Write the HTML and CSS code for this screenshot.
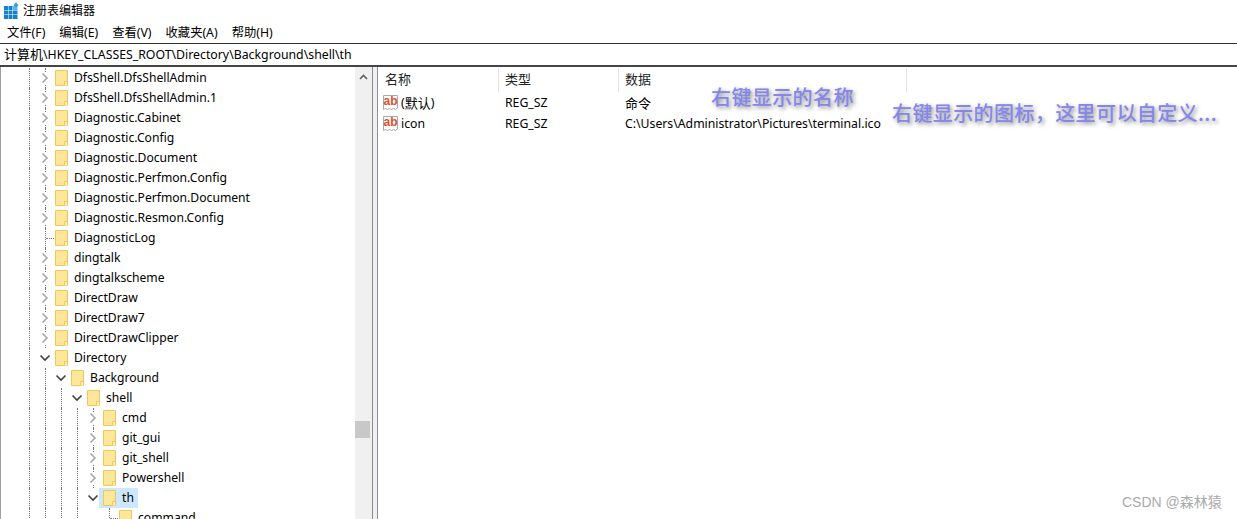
FILE: index.html
```html
<!DOCTYPE html>
<html lang="zh">
<head>
<meta charset="utf-8">
<title>注册表编辑器</title>
<link rel="stylesheet" href="styles.css">
</head>
<body>
<svg width="0" height="0" class="defs">
  <symbol id="folder" viewBox="0 0 13 16">
    <path d="M.5.5h12v15H.5z" fill="#fde79a" stroke="#eec75a"/>
    <path d="M9.500 15.500v-4h3v4" fill="#fff3c4" stroke="#eec75a"/>
  </symbol>
  <symbol id="closed" viewBox="0 0 10 12"><path d="M2.500 1.500 7 6l-4.500 4.500" fill="none" stroke="#a8a8a8" stroke-width="1.600"/></symbol>
  <symbol id="open" viewBox="0 0 12 10"><path d="M1.500 2.500 6 7l4.500-4.500" fill="none" stroke="#404040" stroke-width="1.600"/></symbol>
  <symbol id="ab" viewBox="0 0 17 17">
    <path d="M.5 1.500h14v12.500l-2 1.500-2-1-2 1-2-1-2 1-2-1-2 1z" fill="#fff" stroke="#a9a9a9"/>
  </symbol>
</svg>

<header class="title">
  <svg class="app-icon" width="17" height="19" viewBox="0 0 17 19">
    <path d="M2 6h4v4H2zM6.500 6h4v4h-4zM2 10.500h4v4H2zM6.500 10.500h4v4h-4zM11 10.500h4.500v4H11zM2 15h4v4H2zM6.500 15h4v4h-4zM11 15h4.500v4H11z" fill="#1782c8"/>
    <path d="M11 6h4.500v4H11z" fill="#5fb4e6"/>
    <path d="M14 2.500l2.500 2.500-2.500 2.500-2.500-2.500z" fill="#2f9ee0"/>
  </svg>
  <span>注册表编辑器</span>
</header>
<nav class="menu">
  <span>文件(F)</span><span>编辑(E)</span><span>查看(V)</span><span>收藏夹(A)</span><span>帮助(H)</span>
</nav>
<div class="address"><span class="cjk">计算机</span>\HKEY_CLASSES_ROOT\Directory\Background\shell\th</div>

<main class="panes">
  <section class="tree">
    <div class="row"><i class="g"></i><i class="g l"></i><i class="g l c"><svg class="chev"><use href="#closed"/></svg></i><svg class="fld"><use href="#folder"/></svg><span class="lbl">DfsShell.DfsShellAdmin</span></div>
    <div class="row"><i class="g"></i><i class="g l"></i><i class="g l c"><svg class="chev"><use href="#closed"/></svg></i><svg class="fld"><use href="#folder"/></svg><span class="lbl">DfsShell.DfsShellAdmin.1</span></div>
    <div class="row"><i class="g"></i><i class="g l"></i><i class="g l c"><svg class="chev"><use href="#closed"/></svg></i><svg class="fld"><use href="#folder"/></svg><span class="lbl">Diagnostic.Cabinet</span></div>
    <div class="row"><i class="g"></i><i class="g l"></i><i class="g l c"><svg class="chev"><use href="#closed"/></svg></i><svg class="fld"><use href="#folder"/></svg><span class="lbl">Diagnostic.Config</span></div>
    <div class="row"><i class="g"></i><i class="g l"></i><i class="g l c"><svg class="chev"><use href="#closed"/></svg></i><svg class="fld"><use href="#folder"/></svg><span class="lbl">Diagnostic.Document</span></div>
    <div class="row"><i class="g"></i><i class="g l"></i><i class="g l c"><svg class="chev"><use href="#closed"/></svg></i><svg class="fld"><use href="#folder"/></svg><span class="lbl">Diagnostic.Perfmon.Config</span></div>
    <div class="row"><i class="g"></i><i class="g l"></i><i class="g l c"><svg class="chev"><use href="#closed"/></svg></i><svg class="fld"><use href="#folder"/></svg><span class="lbl">Diagnostic.Perfmon.Document</span></div>
    <div class="row"><i class="g"></i><i class="g l"></i><i class="g l c"><svg class="chev"><use href="#closed"/></svg></i><svg class="fld"><use href="#folder"/></svg><span class="lbl">Diagnostic.Resmon.Config</span></div>
    <div class="row"><i class="g"></i><i class="g l"></i><i class="g l t"></i><svg class="fld"><use href="#folder"/></svg><span class="lbl">DiagnosticLog</span></div>
    <div class="row"><i class="g"></i><i class="g l"></i><i class="g l c"><svg class="chev"><use href="#closed"/></svg></i><svg class="fld"><use href="#folder"/></svg><span class="lbl">dingtalk</span></div>
    <div class="row"><i class="g"></i><i class="g l"></i><i class="g l c"><svg class="chev"><use href="#closed"/></svg></i><svg class="fld"><use href="#folder"/></svg><span class="lbl">dingtalkscheme</span></div>
    <div class="row"><i class="g"></i><i class="g l"></i><i class="g l c"><svg class="chev"><use href="#closed"/></svg></i><svg class="fld"><use href="#folder"/></svg><span class="lbl">DirectDraw</span></div>
    <div class="row"><i class="g"></i><i class="g l"></i><i class="g l c"><svg class="chev"><use href="#closed"/></svg></i><svg class="fld"><use href="#folder"/></svg><span class="lbl">DirectDraw7</span></div>
    <div class="row"><i class="g"></i><i class="g l"></i><i class="g l c"><svg class="chev"><use href="#closed"/></svg></i><svg class="fld"><use href="#folder"/></svg><span class="lbl">DirectDrawClipper</span></div>
    <div class="row"><i class="g"></i><i class="g l"></i><i class="g c"><svg class="chev-o"><use href="#open"/></svg></i><svg class="fld"><use href="#folder"/></svg><span class="lbl">Directory</span></div>
    <div class="row"><i class="g"></i><i class="g l"></i><i class="g l"></i><i class="g c"><svg class="chev-o"><use href="#open"/></svg></i><svg class="fld"><use href="#folder"/></svg><span class="lbl">Background</span></div>
    <div class="row"><i class="g"></i><i class="g l"></i><i class="g l"></i><i class="g l"></i><i class="g c"><svg class="chev-o"><use href="#open"/></svg></i><svg class="fld"><use href="#folder"/></svg><span class="lbl">shell</span></div>
    <div class="row"><i class="g"></i><i class="g l"></i><i class="g l"></i><i class="g l"></i><i class="g l"></i><i class="g l c"><svg class="chev"><use href="#closed"/></svg></i><svg class="fld"><use href="#folder"/></svg><span class="lbl">cmd</span></div>
    <div class="row"><i class="g"></i><i class="g l"></i><i class="g l"></i><i class="g l"></i><i class="g l"></i><i class="g l c"><svg class="chev"><use href="#closed"/></svg></i><svg class="fld"><use href="#folder"/></svg><span class="lbl">git_gui</span></div>
    <div class="row"><i class="g"></i><i class="g l"></i><i class="g l"></i><i class="g l"></i><i class="g l"></i><i class="g l c"><svg class="chev"><use href="#closed"/></svg></i><svg class="fld"><use href="#folder"/></svg><span class="lbl">git_shell</span></div>
    <div class="row"><i class="g"></i><i class="g l"></i><i class="g l"></i><i class="g l"></i><i class="g l"></i><i class="g l c"><svg class="chev"><use href="#closed"/></svg></i><svg class="fld"><use href="#folder"/></svg><span class="lbl">Powershell</span></div>
    <div class="row"><i class="g"></i><i class="g l"></i><i class="g l"></i><i class="g l"></i><i class="g l"></i><i class="g c"><svg class="chev-o"><use href="#open"/></svg></i><span class="sel"><svg class="fld"><use href="#folder"/></svg><span class="lbl">th</span></span></div>
    <div class="row"><i class="g"></i><i class="g l"></i><i class="g l"></i><i class="g l"></i><i class="g l"></i><i class="g"></i><i class="g l t"></i><svg class="fld"><use href="#folder"/></svg><span class="lbl">command</span></div>
  </section>

  <aside class="scroll">
    <svg class="up" width="9" height="6" viewBox="0 0 9 6"><path d="M1 5l3.500-3.500L8 5" fill="none" stroke="#606060" stroke-width="1.600"/></svg>
    <div class="thumb"></div>
  </aside>
  <div class="splitter"></div>

  <section class="list">
    <div class="head">
      <span class="col c1 cjk">名称</span><span class="col c2 cjk">类型</span><span class="col c3 cjk">数据</span>
    </div>
    <div class="item">
      <span class="cell c1"><svg class="ab"><use href="#ab"/><text x="7.500" y="11" text-anchor="middle" class="ab-text">ab</text></svg>(<span class="cjk">默认</span>)</span><span class="cell c2">REG_SZ</span><span class="cell c3 cjk">命令</span>
    </div>
    <div class="item">
      <span class="cell c1"><svg class="ab"><use href="#ab"/><text x="7.500" y="11" text-anchor="middle" class="ab-text">ab</text></svg>icon</span><span class="cell c2">REG_SZ</span><span class="cell c3">C:\Users\Administrator\Pictures\terminal.ico</span>
    </div>
  </section>
</main>

<div class="note note-a">右键显示的名称</div>
<div class="note note-b">右键显示的图标，这里可以自定义...</div>
<div class="mark">CSDN @森林猿</div>
</body>
</html>
```

FILE: styles.css
```css
* { box-sizing: border-box; }
html, body { margin: 0; height: 519px; overflow: hidden; }
body {
  position: relative;
  background: #fff;
  color: #000;
  font: 12.150px/20px "Noto Sans", "Noto Sans CJK SC", sans-serif;
  display: flex;
  flex-direction: column;
}
.defs { position: absolute; }
.cjk { font-size: 13px; }
.title { height: 22px; display: flex; align-items: flex-start; gap: 4px; padding-left: 2px; font-size: 12px; flex: none; }
.title span { line-height: 21px; }
.menu { height: 21px; display: flex; gap: 14px; padding-left: 7px; align-items: center; flex: none; font-size: 12.300px; }
.address {
  height: 24px; flex: none; padding-left: 4px; font-size: 12.300px;
  border-top: 1px solid #333; border-bottom: 2px solid #444;
  line-height: 21px; white-space: nowrap;
}
.panes { flex: 1; display: flex; min-height: 0; }
.tree { width: 355px; flex: none; overflow: hidden; border-left: 1px solid #a0a0a0; padding-left: 3px; padding-top: 1px; }
.row { height: 20px; display: flex; align-items: center; }
.g { width: 16px; height: 20px; flex: none; position: relative; display: block; }
.l::before {
  content: ""; position: absolute; left: 9px; top: 0; bottom: 0;
  border-left: 1px dotted #777;
}
.t::after {
  content: ""; position: absolute; left: 10px; width: 8px; top: 10px;
  border-top: 1px dotted #777;
}
.c { display: flex; align-items: center; justify-content: center; }
.c svg { position: relative; background: #fff; }
.chev { width: 10px; height: 12px; margin-left: 1px; }
.chev-o { width: 12px; height: 10px; margin-left: 2px; }
.fld { width: 13px; height: 16px; flex: none; margin-left: 3px; }
.lbl { margin-left: 6px; white-space: nowrap; }
.sel { display: flex; align-items: center; height: 20px; background: #cce8ff; padding-left: 1px; padding-right: 4px; margin-left: -1px; }
.scroll { width: 17px; flex: none; background: #f0f0f0; position: relative; }
.up { position: absolute; left: 4px; top: 7px; }
.thumb { position: absolute; left: 0; top: 354px; width: 15px; height: 17px; background: #c8c8c8; }
.splitter { width: 6px; flex: none; background: #f0f0f0; border-left: 1px solid #8a8a8a; border-right: 1px solid #8f8fa0; }
.list { flex: 1; }
.head { display: flex; height: 24px; margin-top: 1px; align-items: center; }
.item { display: flex; height: 21px; align-items: center; font-size: 12.250px; }
.c1 { width: 121px; padding-left: 7px; }
.c2 { width: 120px; padding-left: 6px; }
.c3 { width: 288px; padding-left: 6px; white-space: nowrap; }
.col { height: 24px; line-height: 22px; border-right: 1px solid #e5e5e5; color: #222; }
.cell { display: flex; align-items: center; }
.cell.c1 { padding-left: 5px; }
.ab { width: 17px; height: 17px; margin-right: 1px; flex: none; }
.ab-text { font: bold 12px "Liberation Sans", sans-serif; fill: #d9502e; }
.note {
  position: absolute; color: #8486ec; font-size: 20px; line-height: 24px; white-space: nowrap;
  font-family: "Noto Sans CJK SC", sans-serif; font-weight: 500;
  letter-spacing: .400px; text-shadow: 2px 2px 4px #8a8a8a;
}
.note-a { left: 711px; top: 85px; }
.note-b { left: 892px; top: 101px; }
.mark { position: absolute; left: 1122px; top: 492px; color: #aaa; font: 14px/20px "Liberation Sans", "Noto Sans CJK SC", sans-serif; white-space: nowrap; }
```
